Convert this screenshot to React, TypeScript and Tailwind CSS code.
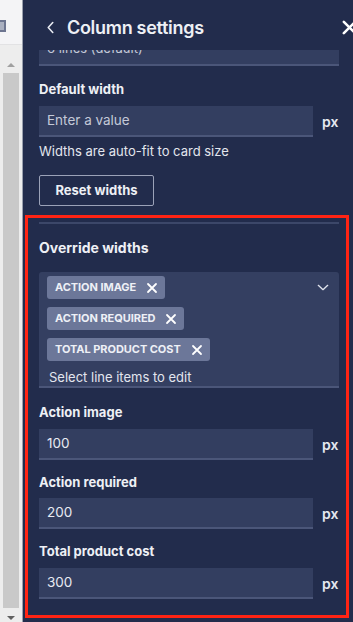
import React from "react";

function XIcon({ className }: { className?: string }) {
  return (
    <svg viewBox="0 0 12 12" className={className} fill="none" stroke="currentColor" strokeWidth="1.8" strokeLinecap="round">
      <path d="M2 2 L10 10 M10 2 L2 10" />
    </svg>
  );
}

function Chip({ label }: { label: string }) {
  return (
    <div className="flex h-[23px] shrink-0 items-center gap-[10px] self-start rounded-[3px] bg-[#6c7799] pl-[8px] pr-[7px] text-[11px] font-bold tracking-[-0.05px] text-[#eef0f6]">
      <span>{label}</span>
      <XIcon className="h-[12px] w-[12px] text-white" />
    </div>
  );
}

function PxInput({ value, placeholder }: { value?: string; placeholder?: string }) {
  return (
    <div className="flex items-center gap-[9px]">
      <div className="flex h-[31px] flex-1 items-center border-b-2 border-[#4b5679] bg-[#333e60] px-[8px] text-[13.5px]">
        {value ? (
          <span className="text-[#e8eaf2]">{value}</span>
        ) : (
          <span className="text-[#c4c9d8]">{placeholder}</span>
        )}
      </div>
      <span className="w-[17px] text-[14px] font-semibold text-[#e5e8f0]">px</span>
    </div>
  );
}

export default function App() {
  return (
    <div
      className="flex h-[622px] w-[353px] overflow-hidden bg-[#222c4c]"
      style={{ fontFamily: "Inter, 'Noto Sans', sans-serif" }}
    >
      {/* left strip */}
      <div className="flex w-[23px] shrink-0 flex-col border-r border-[#9aa0ad] bg-[#f4f4f6]">
        <div className="h-[45px] shrink-0 border-b border-[#e2e2e4] pt-[20px]">
          <div className="h-[12px] w-[6px] border-2 border-l-0 border-[#6d7590] bg-[#aab0c0]" />
        </div>
        <div className="flex flex-1 flex-col items-center bg-[#ededed] px-[3px] pt-[18px] pb-[2px]">
          <div className="h-0 w-0 border-x-[4px] border-b-[4px] border-x-transparent border-b-[#a0a0a0]" />
          <div className="mt-[6px] w-full flex-1 bg-[#c9c9c9]" />
          <div className="mt-[8px] h-0 w-0 border-x-[4px] border-t-[4px] border-x-transparent border-t-[#606060]" />
        </div>
      </div>

      {/* panel */}
      <div className="flex min-w-0 flex-1 flex-col">
        {/* header */}
        <div className="flex h-[50px] shrink-0 items-center pl-[23px] pt-[4px]">
          <svg viewBox="0 0 10 14" className="h-[13px] w-[9px] text-[#e6e9f0]" fill="none" stroke="currentColor" strokeWidth="1.8" strokeLinecap="round" strokeLinejoin="round">
            <path d="M7.5 1.5 L2.5 7 L7.5 12.5" />
          </svg>
          <span className="ml-[12px] text-[18px] font-semibold tracking-[-0.3px] text-[#eef0f5]">Column settings</span>
          <XIcon className="ml-auto mr-[-5px] h-[17px] w-[17px] text-white" />
        </div>

        <div className="shrink-0 pl-[16px] pr-[14px]">
          {/* cut-off top input */}
          <div className="relative h-[16px] overflow-hidden border-b-2 border-[#4b5679] bg-[#333e60]">
            <span className="absolute top-[-11px] left-[8px] text-[13px] text-[#c4c9d8]">6 lines (default)</span>
          </div>

          <div className="mt-[14px] text-[13px] font-bold text-[#eef0f5]">Default width</div>
          <div className="mt-[6px]">
            <PxInput placeholder="Enter a value" />
          </div>
          <div className="mt-[5px] text-[13px] text-[#e3e6ee]">Widths are auto-fit to card size</div>
          <div className="mt-[14px] flex h-[31px] w-[115px] items-center justify-center rounded-[2px] border border-[#9ba2b8] text-[13px] font-bold text-[#eef0f5]">
            Reset widths
          </div>
        </div>

        {/* highlighted section */}
        <div className="mt-[9px] ml-[2px] mr-[4px] shrink-0 border-[3px] border-[#ff2414] pl-[11px] pr-[7px] pt-[4px] pb-[16px]">
          <div className="h-[2px] bg-[#3c4769]" />
          <div className="mt-[14px] text-[14px] font-bold leading-[20px] text-[#eef0f5]">Override widths</div>
          <div className="relative mt-[14px] flex flex-col gap-[8px] rounded-t-[3px] border-b-2 border-[#4b5679] bg-[#343f61] px-[8px] pt-[4px]">
            <Chip label="ACTION IMAGE" />
            <Chip label="ACTION REQUIRED" />
            <Chip label="TOTAL PRODUCT COST" />
            <div className="pl-[2px] text-[13px] leading-[17px] text-[#e3e6ee]">Select line items to edit</div>
            <svg viewBox="0 0 14 8" className="absolute right-[10px] top-[12px] h-[7px] w-[12px] text-[#dfe3ec]" fill="none" stroke="currentColor" strokeWidth="1.6" strokeLinecap="round" strokeLinejoin="round">
              <path d="M1.5 1.5 L7 6.5 L12.5 1.5" />
            </svg>
          </div>

          <div className="mt-[15px] text-[13px] font-bold text-[#eef0f5]">Action image</div>
          <div className="mt-[6px]">
            <PxInput value="100" />
          </div>
          <div className="mt-[13px] text-[13px] font-bold text-[#eef0f5]">Action required</div>
          <div className="mt-[6px]">
            <PxInput value="200" />
          </div>
          <div className="mt-[13px] text-[13px] font-bold text-[#eef0f5]">Total product cost</div>
          <div className="mt-[6px]">
            <PxInput value="300" />
          </div>
        </div>
      </div>
    </div>
  );
}
